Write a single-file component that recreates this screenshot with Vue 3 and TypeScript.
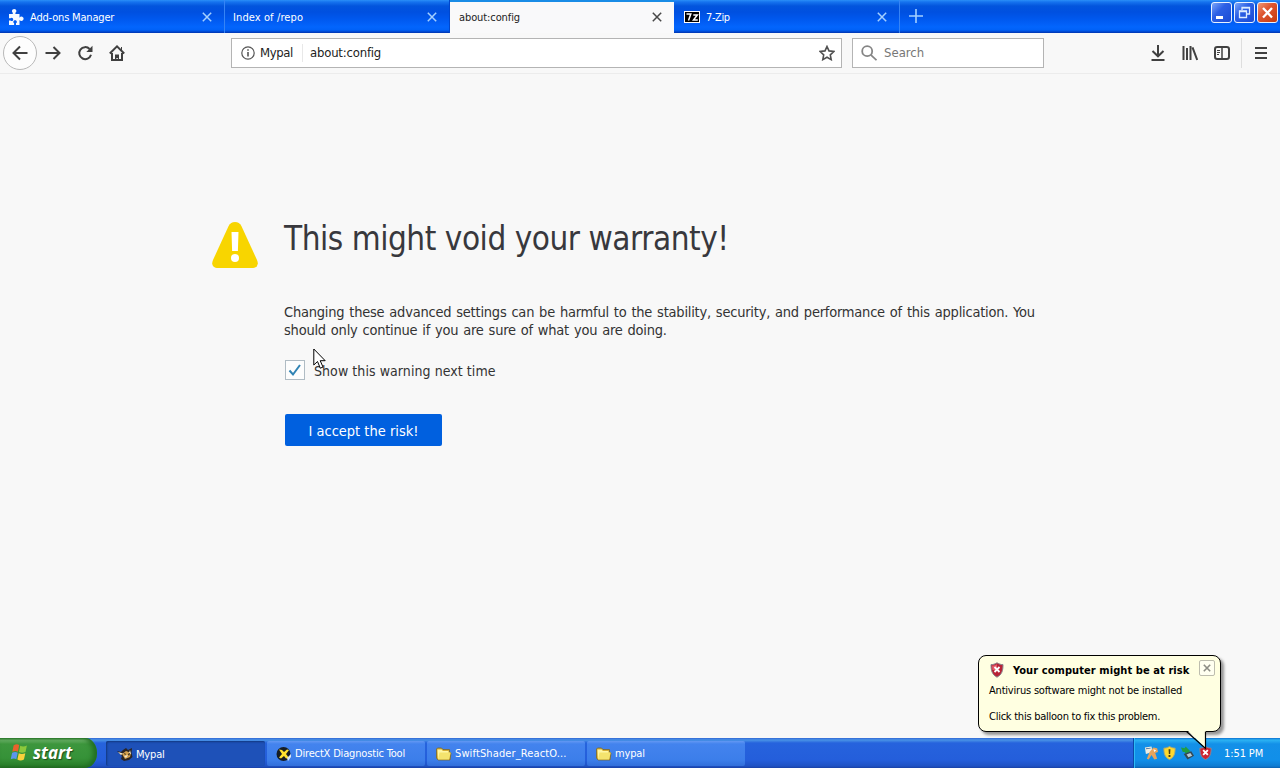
<template>
  <div class="desktop">
    <header class="tab-bar">
      <div v-for="tab in tabs" :key="tab.title" class="tab" :class="{ active: tab.active }">
        <svg v-if="tab.icon === 'addon'" class="tab-icon" viewBox="0 0 16 16" width="16" height="16">
          <path fill="#f4f9ff" d="M1 5h3.800V3.800C4.100 3.200 4 2.600 4 2c0-1.100 1-2 2.200-2s2.200.9 2.200 2c0 .6-.3 1.200-1 1.800V5h4.100v3.700c.5-.8 1.100-1.200 1.900-1.200 1.200 0 2.200 1 2.200 2.200s-1 2.200-2.200 2.200c-.8 0-1.400-.3-1.900-1V16H8v-1.800c.6-.3.9-.8.9-1.300 0-.9-.8-1.600-1.800-1.600s-1.800.7-1.800 1.600c0 .5.3 1 .8 1.300V16H1v-4.600h1.500c.3.5.7.7 1.200.7.8 0 1.500-.8 1.500-1.700S4.500 8.700 3.700 8.700c-.5 0-.9.2-1.200.6H1z"/>
        </svg>
        <svg v-if="tab.icon === 'zip'" class="tab-icon" viewBox="0 0 16 16" width="16" height="16">
          <path fill="#fff" d="M0 2h16v12H0z"/>
          <path fill="#000" d="M1 3h14v10H1z"/>
          <path fill="none" stroke="#fff" stroke-width="1.5" d="M2.500 5h4.300L4.500 11.500M9.300 6h4l-3.800 5h4.300"/>
        </svg>
        <span class="tab-title">{{ tab.title }}</span>
        <svg class="tab-close" viewBox="0 0 10 10" width="10" height="10"><path d="M.8.8l8.400 8.400M9.200.8L.8 9.200"/></svg>
      </div>
      <svg class="new-tab" viewBox="0 0 14 14" width="14" height="14"><path d="M7 0v14M0 7h14"/></svg>
      <div class="window-buttons">
        <button class="win-btn">
          <svg viewBox="0 0 19 19" width="19" height="19"><path fill="#fff" d="M4 13h7v3H4z"/></svg>
        </button>
        <button class="win-btn">
          <svg viewBox="0 0 19 19" width="19" height="19"><path fill="none" stroke="#dcecff" stroke-width="1.3" d="M7 7V4.500h7.500V11H12"/><path fill="none" stroke="#dcecff" stroke-width="1.3" d="M4.500 8H11.500v6.500h-7z"/><path stroke="#dcecff" stroke-width="1.5" d="M7 4.800h7.500M4 8.500h8"/></svg>
        </button>
        <button class="win-btn close">
          <svg viewBox="0 0 19 19" width="19" height="19"><path stroke="#fff" stroke-width="2.3" d="M5 5l9 9.500M14 5l-9 9.500"/></svg>
        </button>
      </div>
    </header>

    <nav class="nav-bar">
      <div class="back">
        <svg viewBox="0 0 16 16" width="16" height="16"><path d="M15.500 8H1.500M8 1.500L1.500 8 8 14.500"/></svg>
      </div>
      <svg class="nav-icon forward" viewBox="0 0 16 16" width="16" height="16"><path d="M.5 8h14M8.500 2l6 6-6 6"/></svg>
      <svg class="nav-icon reload" viewBox="0 0 16 16" width="16" height="16"><path d="M14 9.800A6 6 0 1 1 12.600 4"/><path class="solid" d="M15.500.8V7H9.300z"/></svg>
      <svg class="nav-icon home" viewBox="0 0 16 16" width="16" height="16"><path d="M.8 8.500L8 1.400l7.200 7.100M3 8v7h10V8"/><path class="solid" d="M6 15V9.500h4V15H8.800v-2H7.400v2z"/><path stroke-width="1" d="M12.500 2v3"/></svg>
      <div class="url-bar">
        <svg class="info" viewBox="0 0 14 14" width="14" height="14"><circle cx="7" cy="7" r="6.2"/><path stroke-width="1.6" d="M7 6v4.500M7 3.300v1.500"/></svg>
        <span class="identity">Mypal</span>
        <span class="url">about:config</span>
        <svg class="star" viewBox="0 0 16 16" width="16" height="16"><path d="M8 1.500l2 4.400 4.900.6-3.600 3.300.9 4.800L8 12.200l-4.200 2.400.9-4.800L1.100 6.500 6 5.900z"/></svg>
      </div>
      <div class="search-bar">
        <svg viewBox="0 0 16 16" width="16" height="16"><circle cx="6.2" cy="6.2" r="5"/><path d="M9.800 9.800l5.700 5.400"/></svg>
        <span>Search</span>
      </div>
      <div class="tools">
        <svg class="nav-icon" viewBox="0 0 16 16" width="16" height="16"><path d="M8 0v11M2.500 6L8 11.300 13.500 6M1.500 15h13"/></svg>
        <svg class="nav-icon" viewBox="0 0 16 16" width="16" height="16"><path d="M1.500 1v14M5 3v12M8.500 1v14M10.500 2.300L15.200 15"/></svg>
        <svg class="nav-icon" viewBox="0 0 16 16" width="16" height="16"><rect x="1" y="2" width="14" height="12" rx="2.2"/><path stroke-width="1.5" d="M8 2v12"/><path stroke-width="1" d="M3 5.500h3M3 7.500h3M3 9.500h2"/></svg>
        <div class="menu-button">
          <svg class="nav-icon" viewBox="0 0 14 14" width="14" height="14"><path d="M1 2h12M1 7h12M1 12h12"/></svg>
        </div>
      </div>
    </nav>

    <main class="page">
      <section class="warning">
        <svg class="warning-icon" viewBox="0 0 46 46" width="46" height="46">
          <path fill="#f8d500" d="M23 0c3 0 5 1.300 6.400 4l15.600 34c2 4.500 0 8-5 8H6c-5 0-7-3.500-5-8L16.600 4C18 1.300 20 0 23 0z"/>
          <path fill="#fff" d="M19.500 10h7l-.6 19h-5.800z"/>
          <circle cx="23" cy="36" r="4" fill="#fff"/>
        </svg>
        <div class="warning-body">
          <h1>This might void your warranty!</h1>
          <p>
            Changing these advanced settings can be harmful to the stability, security, and performance of this application. You<br>
            should only continue if you are sure of what you are doing.
          </p>
          <label class="check-row" @click="showWarning = !showWarning">
            <span class="checkbox">
              <svg v-if="showWarning" viewBox="0 0 18 18" width="18" height="18"><path d="M3.500 9.500l3.500 4L14 4"/></svg>
            </span>
            <span class="check-text">Show this warning next time</span>
          </label>
          <button class="accept">I accept the risk!</button>
        </div>
      </section>
    </main>

    <footer class="taskbar">
      <button class="start">
        <svg viewBox="0 0 18 18" width="19" height="19">
          <path fill="#e9622c" d="M3.500 2.200C5.500 1 7.200 1 8.700 2L7.500 8.200C6 7.300 4.200 7.300 2.200 8.300z"/>
          <path fill="#8cc83c" d="M9.700 2.600c1.800.9 4 .9 6.300-.2l-1.300 6.200c-2.200 1-4.300 1-6.200 0z"/>
          <path fill="#5c96ec" d="M2 9.300c2-1 3.800-1 5.300-.1L6 15.300c-1.500-.9-3.300-.9-5.300.2z"/>
          <path fill="#fbd13b" d="M8.300 9.700c1.900.9 4 .9 6.200 0l-1.300 6c-2.200 1.100-4.300 1.100-6.200 0z"/>
        </svg>
        <span>start</span>
      </button>
      <div class="tasks">
        <div v-for="task in tasks" :key="task.title" class="task" :class="{ pressed: task.pressed }">
          <svg v-if="task.icon === 'mypal'" viewBox="0 0 16 16" width="16" height="16">
            <path fill="#2b2524" d="M0 5l4 1 2-2 3-2 2 2 4-2-.5 5 1 4-3.500 3-5 1-3-2 1-3z"/>
            <path fill="#d3a04c" d="M5 8l4-3 5 2-1 4-5 2z"/>
            <path fill="#f1e6cd" d="M1 6l5 1.500-2 1.500zM7 10l4-1-2 3zM13 4l1 4-2-1z"/>
            <path fill="#161616" d="M7 7l2 1-1 1zM11 8l2-1-1 3z"/>
          </svg>
          <svg v-else-if="task.icon === 'directx'" viewBox="0 0 16 16" width="16" height="16">
            <circle cx="7.500" cy="8" r="7" fill="#151c24"/>
            <path fill="#ffe22e" d="M3 3.500l3 .5 2 2 3-2.500 2 .5-3 4 3 4-3 .5L8 10l-3 2.500-2-1 3-3.500z"/>
            <path fill="#d7e4f6" d="M11 12l4-4v3l-3 4z"/>
          </svg>
          <svg v-else viewBox="0 0 16 16" width="16" height="16">
            <path fill="#d6ae35" stroke="#77672d" stroke-width=".8" d="M.5 3l1-1h4L7 3.500h6.500V6l1.500 1-1 7H2L.5 12z"/>
            <path fill="#fff6a4" d="M1.500 3.500h4L7 5h5.500v8H2z"/>
            <path fill="#f4e36e" d="M3.500 6.500h11.200l-1.700 7H2z"/>
          </svg>
          <span>{{ task.title }}</span>
        </div>
      </div>
      <div class="tray">
        <svg viewBox="0 0 16 16" width="15" height="16">
          <path fill="#f1ede0" d="M1 2l7-1 1 6-7 2z"/><path fill="#57779e" d="M2 3l5-.7.2 1L2.200 4z"/>
          <path fill="#e8a45c" d="M6 7l4-5 4 1 1 4-3 1 2 6-3 1-3-5-3 5-2-1z"/><path fill="#fff" d="M10 4l3 1-2 2z"/>
        </svg>
        <svg viewBox="0 0 16 16" width="15" height="16">
          <path fill="#ffd92d" stroke="#a9a678" d="M8 1c2 1.300 4 1.800 6 1.800 0 6-1 9.700-6 12.200C3 12.500 2 8.800 2 2.800 4 2.800 6 2.300 8 1z"/>
          <path fill="#463c16" d="M7 4h2l-.3 5H7.300zM7 10.200h2v2H7z"/>
        </svg>
        <svg viewBox="0 0 16 16" width="15" height="16">
          <path fill="#219d42" d="M1 2l4 1 1-2 5 5-5 3-1-2H3z"/><path fill="#354954" d="M4 9l8-3 3 5-7 4z"/><path fill="#b8ccd4" d="M7 9.500l4-1.500 2 3-4 1.500z"/>
        </svg>
        <svg viewBox="0 0 16 16" width="15" height="16">
          <path fill="#cf2431" stroke="#8e8795" d="M8 1c2 1.300 4 1.800 6 1.800 0 6-1 9.700-6 12.200C3 12.500 2 8.800 2 2.800 4 2.800 6 2.300 8 1z"/>
          <path stroke="#fff" stroke-width="2" d="M5.500 5l5 5M10.500 5l-5 5"/>
        </svg>
        <span class="clock">1:51 PM</span>
      </div>
    </footer>

    <aside v-if="balloonOpen" class="balloon">
      <div class="balloon-head">
        <svg viewBox="0 0 16 16" width="16" height="16">
          <path fill="#b92235" stroke="#85858d" d="M8 .8c2 1.300 4 1.800 6 1.800 0 6-1 10-6 12.600C3 12.600 2 8.600 2 2.600c2 0 4-.5 6-1.800z"/>
          <path fill="#e45c68" d="M3 3.500C5 3.500 7 3 8 2v6H3.500z"/>
          <path stroke="#fff" stroke-width="1.8" d="M5.500 5l5 5M10.500 5l-5 5"/>
        </svg>
        <strong>Your computer might be at risk</strong>
        <button class="balloon-close" @click="balloonOpen = false">
          <svg viewBox="0 0 8 8" width="8" height="8"><path d="M.8.8l6.400 6.400M7.200.8L.8 7.200"/></svg>
        </button>
      </div>
      <p class="balloon-text">Antivirus software might not be installed</p>
      <p class="balloon-link">Click this balloon to fix this problem.</p>
      <svg class="balloon-tail" viewBox="0 0 24 22" width="24" height="22">
        <path fill="#ffffe1" d="M1 0l19 18.500V0z"/>
        <path fill="none" stroke="#000" stroke-width="1.2" d="M.5 1.500L19.500 18.500V1.400"/>
      </svg>
    </aside>

    <svg class="cursor" viewBox="0 0 13 22" width="13" height="22">
      <path fill="#fff" stroke="#000" d="M.8 1v16l3.700-3.500 2.800 6.700 2.700-1.200-2.800-6.300h5z"/>
    </svg>
  </div>
</template>

<script setup lang="ts">
import { ref } from 'vue'

interface Tab {
  title: string
  icon?: string
  active?: boolean
}

interface Task {
  title: string
  icon: string
  pressed?: boolean
}

const tabs: Tab[] = [
  { title: 'Add-ons Manager', icon: 'addon' },
  { title: 'Index of /repo' },
  { title: 'about:config', active: true },
  { title: '7-Zip', icon: 'zip' }
]

const tasks: Task[] = [
  { title: 'Mypal', icon: 'mypal', pressed: true },
  { title: 'DirectX Diagnostic Tool', icon: 'directx' },
  { title: 'SwiftShader_ReactO...', icon: 'folder' },
  { title: 'mypal', icon: 'folder' }
]

const showWarning = ref(true)
const balloonOpen = ref(true)
</script>

<style>
body {
  margin: 0;
  overflow: hidden;
}
</style>

<style scoped>
* {
  box-sizing: border-box;
}

.desktop {
  position: relative;
  display: flex;
  flex-direction: column;
  width: 1280px;
  height: 768px;
  overflow: hidden;
  background: #f8f8f8;
  font-family: Tahoma, "DejaVu Sans Condensed", "DejaVu Sans", sans-serif;
  font-stretch: condensed;
  font-size: 11px;
  color: #222;
}

svg {
  flex: none;
  display: block;
}

button {
  padding: 0;
  border: 0;
  font: inherit;
}

/* title bar with tabs */
.tab-bar {
  display: flex;
  flex: none;
  height: 33px;
  background: linear-gradient(#2b90f8 0, #1673ef 2px, #0355dd 6px, #0050e0 12px, #0058ee 19px, #0365fd 27px, #0061f7 30px, #0034b0 33px);
}

.tab {
  display: flex;
  align-items: center;
  width: 225px;
  height: 33px;
  padding: 1px 12px 0 8px;
  border-right: 1px solid #3684f5;
  color: #fff;
  letter-spacing: -.18px;
}

.tab:nth-child(2) {
  border-right-color: #0046cc;
  letter-spacing: .1px;
}

.tab.active {
  width: 224px;
  padding: 0 12px 1px 9px;
  border-top: 2px solid #198ce6;
  border-right: 0;
  background: #f9f9fa;
  color: #222;
  letter-spacing: -.1px;
}

.tab:nth-child(4) {
  width: 226px;
  padding-left: 10px;
  letter-spacing: -.4px;
}

.tab-icon {
  margin-right: 6px;
}

.tab-title {
  flex: 1;
  white-space: nowrap;
}

.tab-close {
  fill: none;
  stroke: #a4d0ff;
  stroke-width: 1.5;
}

.active .tab-close {
  stroke: #484848;
}

.new-tab {
  margin: 9px 0 0 9px;
  stroke: #a4d0ff;
  stroke-width: 1.6;
}

.window-buttons {
  display: flex;
  gap: 2px;
  margin: 2px 2px 0 auto;
}

.win-btn {
  width: 21px;
  height: 21px;
  border: 1px solid #e8f2ff;
  border-radius: 3px;
  background: linear-gradient(135deg, #7ba6fa, #2c60e5 40%, #1b4bd4);
}

.win-btn.close {
  background: linear-gradient(135deg, #ef9875, #de5630 40%, #c53a10);
}

/* navigation toolbar */
.nav-bar {
  display: flex;
  flex: none;
  align-items: center;
  height: 41px;
  padding: 0 12px 1px 3px;
  border-bottom: 1px solid #ececec;
  background: #f8f8f8;
  font-size: 13px;
}

.back {
  display: grid;
  place-items: center;
  width: 34px;
  height: 34px;
  border: 1px solid #b8b8b8;
  border-radius: 50%;
  background: #fdfdfd;
}

.back svg,
.nav-icon {
  fill: none;
  stroke: #404040;
  stroke-width: 2;
}

.nav-icon .solid {
  fill: #404040;
  stroke: none;
}

.forward {
  margin-left: 8px;
}

.reload,
.home {
  margin-left: 16px;
}

.url-bar {
  display: flex;
  align-items: center;
  width: 611px;
  height: 30px;
  margin-left: 106px;
  padding: 0 6px 0 9px;
  border: 1px solid #b4b4b4;
  background: #fff;
  letter-spacing: -.2px;
}

.info {
  fill: none;
  stroke: #555;
  stroke-width: 1.2;
}

.identity {
  width: 43px;
  margin-left: 5px;
  border-right: 1px solid #e8e8e8;
  line-height: 18px;
  letter-spacing: -.4px;
}

.url {
  flex: 1;
  margin-left: 7px;
}

.star {
  fill: none;
  stroke: #505050;
  stroke-width: 1.6;
}

.search-bar {
  display: flex;
  align-items: center;
  gap: 7px;
  width: 192px;
  height: 30px;
  margin-left: 10px;
  padding-left: 8px;
  border: 1px solid #b4b4b4;
  background: #fff;
  color: #777;
}

.search-bar svg {
  fill: none;
  stroke: #858585;
  stroke-width: 1.8;
}

.tools {
  display: flex;
  align-items: center;
  gap: 16px;
  margin-left: auto;
}

.menu-button {
  display: flex;
  align-items: center;
  height: 30px;
  margin-left: -5px;
  padding-left: 12px;
  border-left: 1px solid #dedede;
}

/* about:config warning */
.page {
  flex: 1;
  padding: 148px 0 0 212px;
  background: #f8f8f8;
}

.warning {
  display: flex;
  gap: 26px;
}

.warning-body {
  display: flex;
  flex-direction: column;
  align-items: flex-start;
}

h1 {
  margin: -3px 0 0;
  font-size: 33px;
  font-weight: 400;
  line-height: 40px;
  letter-spacing: -.47px;
  color: #38383d;
  white-space: nowrap;
}

.warning-body p {
  margin: 44px 0 0;
  font-size: 14.5px;
  line-height: 18px;
  letter-spacing: -.22px;
  word-spacing: 1px;
  color: #333;
  white-space: nowrap;
}

.check-row {
  display: flex;
  align-items: center;
  gap: 9px;
  margin: 21px 0 0 1px;
  font-size: 14px;
  letter-spacing: .07px;
  color: #333;
}

.check-text {
  padding-top: 2px;
}

.checkbox {
  width: 20px;
  height: 20px;
  border: 1px solid #b0bcc4;
  background: #fdfdfd;
}

.checkbox svg {
  fill: none;
  stroke: #3083b4;
  stroke-width: 2;
}

.accept {
  width: 157px;
  height: 32px;
  margin: 34px 0 0 1px;
  padding-top: 2px;
  border-radius: 2px;
  background: #0060df;
  color: #fff;
  font-size: 14.5px;
}

/* taskbar */
.taskbar {
  display: flex;
  flex: none;
  height: 30px;
  background: linear-gradient(#3168d5 0, #4993e6 2px, #2663dd 5px, #245edb 22px, #1f52c4 28px, #1941a5);
}

.start {
  display: flex;
  align-items: center;
  gap: 4px;
  width: 97px;
  padding: 0 0 1px 10px;
  border-radius: 0 12px 12px 0 / 0 15px 15px 0;
  background: linear-gradient(#2e7d2e 0, #6bb368 2px, #3d963d 6px, #369238 20px, #2b812b 27px, #206820);
  box-shadow: inset -4px 0 5px #216e21;
  color: #fff;
  font-family: "Open Sans", "Noto Sans", sans-serif;
  font-size: 17px;
  font-stretch: normal;
  font-style: italic;
  font-weight: 700;
  text-shadow: 1px 1px 1px #1c4d1c;
}

.tasks {
  display: flex;
  gap: 2px;
  margin: 3px 0 2px 9px;
}

.task {
  display: flex;
  align-items: center;
  gap: 3px;
  width: 158px;
  height: 25px;
  padding-left: 9px;
  border-radius: 2px;
  background: linear-gradient(#6398f3 0, #4383ee 3px, #3c7eea 19px, #326fda);
  color: #fff;
  letter-spacing: -.17px;
  white-space: nowrap;
}

.task:nth-child(3) {
  letter-spacing: .12px;
}

.task.pressed {
  width: 159px;
  padding: 1px 0 0 11px;
  background: #1e51b8;
  box-shadow: inset 1px 1px 2px #123880;
}

.tray {
  display: flex;
  align-items: center;
  gap: 3px;
  width: 147px;
  margin-left: auto;
  padding-left: 10px;
  border-left: 1px solid #0b4aa8;
  box-shadow: inset 1px 0 #2dbbf5;
  background: linear-gradient(#0c6fd0 0, #2cb3f3 2px, #1390e8 6px, #118fe9 22px, #0f7cd2 28px, #0c60b0);
  color: #fff;
}

.clock {
  margin-left: 8px;
  letter-spacing: -.1px;
  white-space: nowrap;
}

/* tray balloon, floats over the page and the taskbar */
.balloon {
  position: absolute;
  left: 978px;
  top: 655px;
  width: 243px;
  height: 77px;
  padding: 6px 5px 0 10px;
  border: 1px solid #000;
  border-radius: 8px;
  background: #ffffe1;
  box-shadow: 3px 3px 3px rgba(0, 0, 0, .4);
  color: #000;
  white-space: nowrap;
}

.balloon-head {
  display: flex;
  height: 16px;
}

.balloon-head strong {
  margin-left: 8px;
  line-height: 18px;
  letter-spacing: .08px;
}

.balloon-close {
  display: grid;
  place-items: center;
  width: 16px;
  height: 16px;
  margin: -2px 0 0 auto;
  border: 1px solid #bdbdae;
  border-radius: 2px;
  background: #fffff0;
}

.balloon-close svg {
  stroke: #8c8c84;
  stroke-width: 1.6;
}

.balloon p {
  margin: 0;
  line-height: 14px;
  letter-spacing: -.2px;
}

.balloon .balloon-text {
  margin-top: 6px;
}

.balloon .balloon-link {
  margin-top: 12px;
  letter-spacing: -.25px;
}

.balloon-tail {
  position: absolute;
  left: 207px;
  top: 74px;
}

.cursor {
  position: absolute;
  left: 313px;
  top: 348px;
}
</style>
